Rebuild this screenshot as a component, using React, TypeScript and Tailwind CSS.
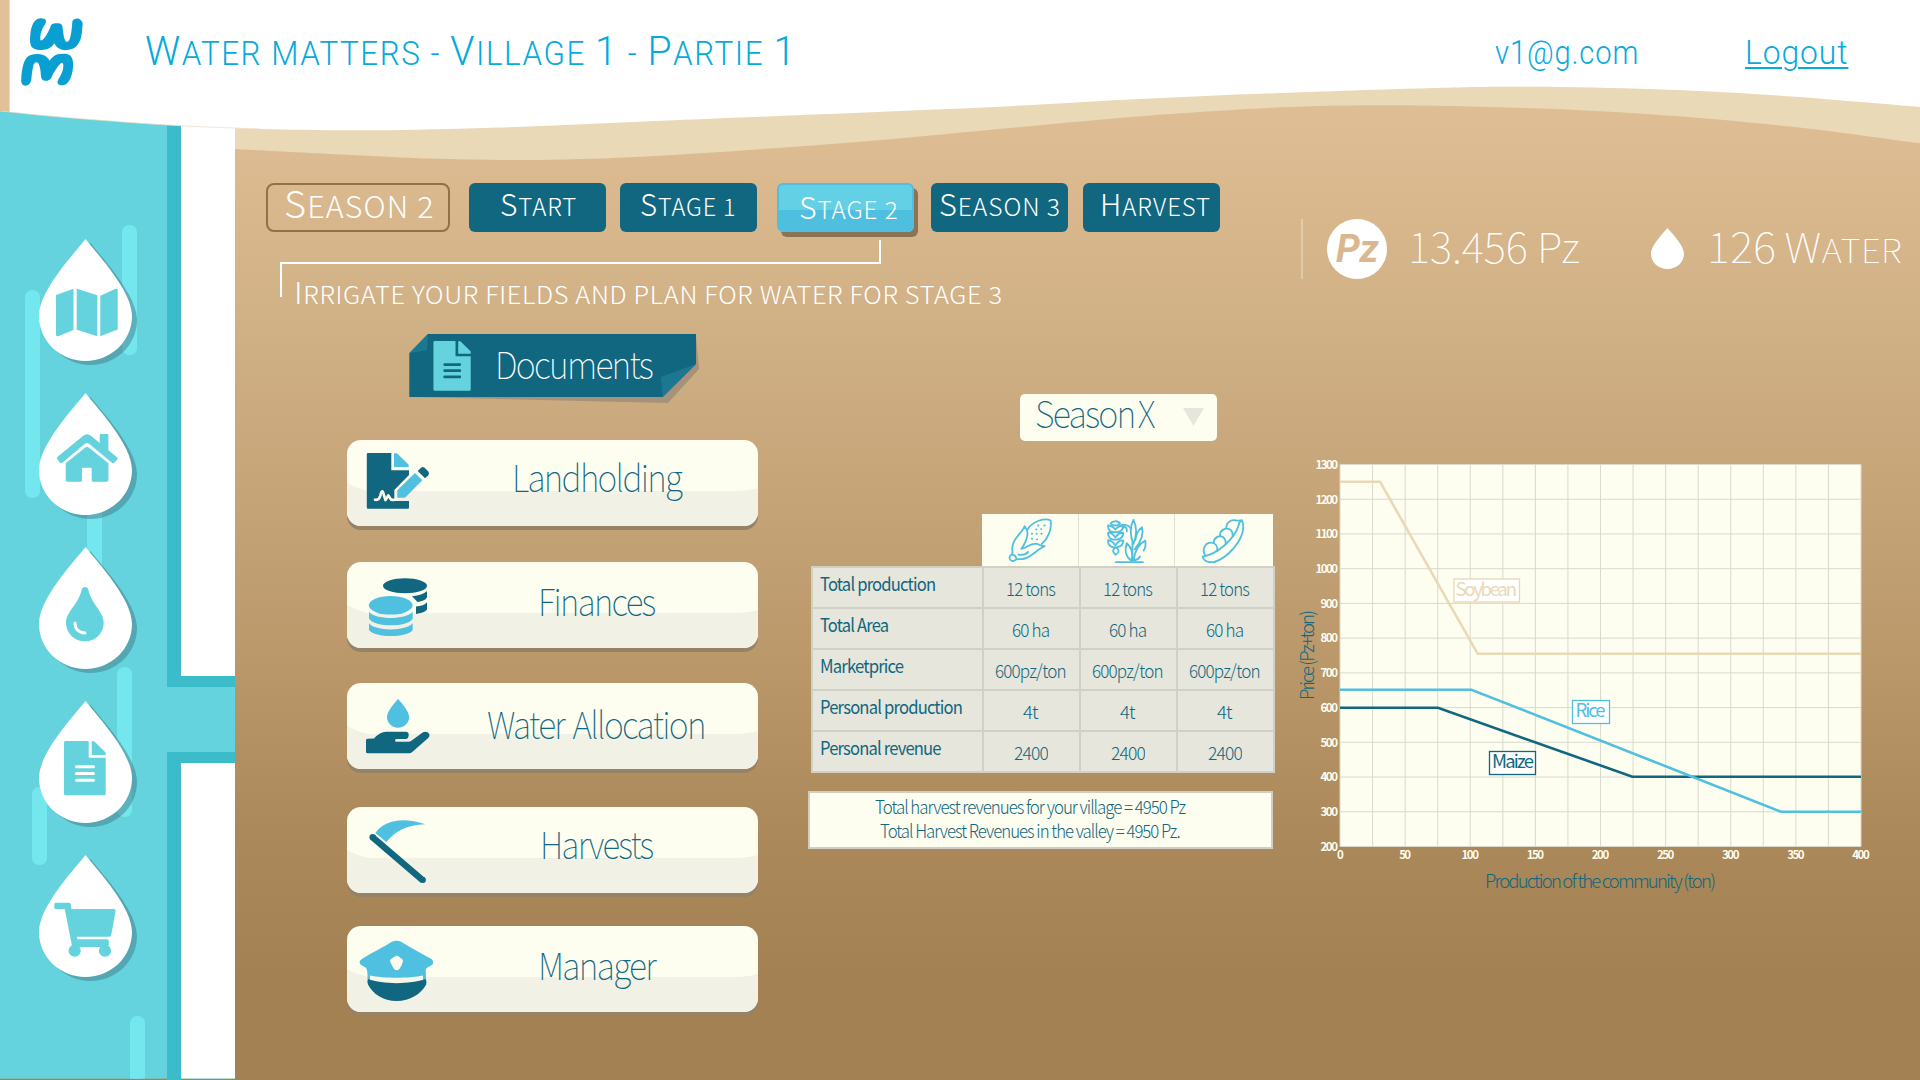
import React, { useLayoutEffect, useRef, useState } from "react";

/* ---------- text helpers ---------- */

/* Sets a line of text at an exact measure by condensing or widening it. */
function Fit({ w, className = "", children }: { w: number; className?: string; children: React.ReactNode }) {
  const ref = useRef<HTMLSpanElement>(null);
  const [scale, setScale] = useState(1);
  useLayoutEffect(() => {
    if (ref.current) setScale(w / ref.current.offsetWidth);
  }, [w]);
  return (
    <span className={`flex shrink-0 leading-none ${className}`} style={{ width: w }}>
      <span ref={ref} className="block shrink-0 origin-left whitespace-nowrap" style={{ transform: `scaleX(${scale})` }}>
        {children}
      </span>
    </span>
  );
}

/* Small capitals: lower-case runs are set as reduced capitals. */
function Caps({ text, smallDigits = false }: { text: string; smallDigits?: boolean }) {
  const pattern = smallDigits ? /([A-Z.]+)/ : /([A-Z0-9.]+)/;
  return (
    <>
      {text.split(pattern).map((part, i) =>
        i % 2 ? (
          <span key={i}>{part}</span>
        ) : (
          <span key={i} className="text-[0.8em] uppercase">
            {part}
          </span>
        )
      )}
    </>
  );
}

/* Smooth curve through a list of points. */
function curve(pts: number[][]) {
  let d = "";
  for (let i = 0; i < pts.length - 1; i++) {
    const p0 = pts[i - 1] || pts[i];
    const p1 = pts[i];
    const p2 = pts[i + 1];
    const p3 = pts[i + 2] || p2;
    d += ` C${p1[0] + (p2[0] - p0[0]) / 6} ${p1[1] + (p2[1] - p0[1]) / 6} ${p2[0] - (p3[0] - p1[0]) / 6} ${
      p2[1] - (p3[1] - p1[1]) / 6
    } ${p2[0]} ${p2[1]}`;
  }
  return d;
}

const upper = [[0, 111], [60, 117], [167, 125], [260, 129], [370, 130.3], [500, 127.5], [640, 121.7], [820, 114.3], [999, 106.7], [1140, 99], [1280, 93], [1443, 87.7], [1533, 86.8], [1655, 89.3], [1770, 95], [1920, 107]];
const lower = [[235, 149], [351, 155], [430, 158.6], [525, 160], [640, 156.7], [795, 146.7], [917, 136.7], [1007, 128.3], [1089, 120.7], [1170, 114], [1280, 107.3], [1385, 105.2], [1525, 108], [1647, 114], [1790, 126.5], [1920, 143.3]];

function Scenery() {
  return (
    <svg className="absolute inset-0" width="1920" height="1080" viewBox="0 0 1920 1080">
      <path d={`M235 100 L235 149${curve(lower)} L1920 60 L235 60Z`} fill="#e9d9b7" />
      <path d="M0 100H235V1078.7H0Z" fill="#64d3dd" />
      <path d="M167 100H181V676H235V687H167ZM167 752H235V763H181V1080H167Z" fill="#3cbcca" />
      <path d="M181 100H235V676H181ZM181 763H235V1078.5H181Z" fill="#fff" />
      <g fill="#74e7ee">
        <rect x="122" y="225" width="15" height="130" rx="7" />
        <rect x="25" y="290" width="15" height="208" rx="7" />
        <rect x="87" y="480" width="15" height="110" rx="7" />
        <rect x="117" y="667" width="15" height="150" rx="7" />
        <rect x="32" y="787" width="15" height="78" rx="7" />
        <rect x="130" y="1016" width="15" height="62.7" rx="7" />
        <rect x="130" y="1040" width="15" height="38.7" />
      </g>
      <path d={`M0 0 L0 111${curve(upper)} L1920 0Z`} fill="#fff" />
      <path d={`M0 111${curve(upper.slice(0, 4))}`} fill="none" stroke="#ecd9bd" strokeWidth="0.7" />
      <path d="M0 0H9.6V111.8L0 111Z" fill="#e3c198" />
    </svg>
  );
}

/* ---------- sidebar ---------- */

const DROP = "M46.5 0C60 17 93 52 93 77C93 102 72 122 46.5 122C21 122 0 102 0 77C0 52 33 17 46.5 0Z";

function DocShape() {
  return (
    <>
      <path d="M26.5 40H49.7V56.7H66.7V92.8Q66.7 94.3 65.2 94.3H26.5Q25 94.3 25 92.8V41.5Q25 40 26.5 40Z" />
      <path d="M52.7 40.3H55.2L66.7 51.5V54H52.7Z" />
    </>
  );
}

function DocLines({ stroke }: { stroke: string }) {
  return <path d="M37.5 65.7H54.5M37.5 72.4H54.5M37.5 79.2H54.5" stroke={stroke} strokeWidth="3" strokeLinecap="round" />;
}

const menu = [
  {
    name: "Map",
    icon: (
      <>
        <path d="M17 56L34.5 49.7V91L18.5 97.5L17 96.5Z" />
        <path d="M37.7 49.7L58.3 56.3V97.3L37.7 90.7Z" />
        <path d="M61.3 56.7L77.3 49.6L78.7 50.5V90.5L61.3 97.3Z" />
      </>
    ),
  },
  {
    name: "Home",
    icon: (
      <>
        <path d="M18.2 66Q17.4 65 18.6 63.8L44 43Q48 39.5 52.3 43L60.7 50V42.4Q60.7 41 62 41H68Q69.4 41 69.4 42.4V57.3L78 64.3Q79 65.4 78.3 66.4L75 70Q74 70.6 73 69.8L50 50.8Q48 49 46 50.8L23.3 69.8Q22.3 70.6 21.3 70Z" />
        <path d="M26.7 70.3L46.2 54.6Q48 53 49.8 54.6L69.4 70.3V87.3Q69.4 88.7 68 88.7H54Q52.7 88.7 52.7 87.5V76Q52.7 74.7 51.5 74.7H44.3Q43 74.7 43 76V87.5Q43 88.7 41.8 88.7H28.2Q26.7 88.7 26.7 87.3Z" />
      </>
    ),
  },
  {
    name: "Water",
    icon: (
      <>
        <path d="M42.6 43C43 39 49 39 49.4 43C52.5 57 64.7 65 64.7 75.5C64.7 86.5 56.5 94.3 46 94.3C35.5 94.3 27 86.5 27 75.5C27 65 39.5 57 42.6 43Z" />
        <path d="M36 76C36 82 40 85.7 46 86" fill="none" stroke="#fff" strokeWidth="3" strokeLinecap="round" />
      </>
    ),
  },
  {
    name: "Documents",
    icon: (
      <>
        <DocShape />
        <DocLines stroke="#fff" />
      </>
    ),
  },
  {
    name: "Shop",
    icon: (
      <>
        <path d="M17 47.7H30Q31.8 47.7 32 50L32.5 54H75Q77 54 76.6 56L72.3 79.8Q72 81.7 70 81.7H37.8L38.3 84.3H68Q69.8 84.3 69.8 86V90L66 92H40L33 91L25.8 54.3H17Q15.3 54.3 15.3 52.5V49.4Q15.3 47.7 17 47.7Z" />
        <circle cx="35.7" cy="95.7" r="6.1" />
        <circle cx="66" cy="95.7" r="6.1" />
      </>
    ),
  },
];

function Sidebar() {
  return (
    <aside className="flex w-[235px] shrink-0 flex-col gap-[26px] pl-[39px] pt-[111px]">
      {menu.map((m) => (
        <button key={m.name} aria-label={m.name} className="block h-[128px] w-[99px] shrink-0">
          <svg width="99" height="128" viewBox="0 0 99 128">
            <path d={DROP} transform="translate(5 4)" fill="#3f6f7e" fillOpacity="0.45" />
            <path d={DROP} fill="#fff" />
            <g fill="#64d3dd">{m.icon}</g>
          </svg>
        </button>
      ))}
    </aside>
  );
}

/* ---------- header ---------- */

function TopBar() {
  return (
    <header className="flex h-[128px] shrink-0 items-start text-[#06aadb]">
      <svg className="ml-[15px] mt-[12px] shrink-0" width="80" height="80" viewBox="45 36 240 240" fill="#0a9fd3">
        <path d="M112 57C120 53 136 54 138 62C138 68 136 72 131 79C124 92 120 105 121 118C121 124 127 122 133 114C141 104 147 92 151 82C154 72 158 70 169 70C180 70 185 71 187 79C190 94 190 112 196 122C200 128 206 126 209 118C214 104 216 82 217 64C221 55 230 54 236 56C244 59 249 66 248 74C246 84 247 96 244 108C240 128 230 142 216 147C202 152 186 152 176 145C170 141 166 136 163 130C158 138 150 145 140 148C126 152 108 151 99 144C90 138 89 122 91 104C92 84 100 62 112 57Z" />
        <path d="M64 236C64 222 66 212 68 202C72 184 78 170 92 165C104 161 118 161 128 164C138 167 144 174 149 182C154 174 164 166 172 163C184 160 200 160 208 165C218 171 220 184 219 200C218 220 212 240 200 251C192 257 180 258 174 252C170 246 174 238 180 230C188 216 190 206 190 196C190 188 186 186 181 191C172 200 166 210 160 220C155 230 154 240 142 242C130 243 124 240 123 228C122 214 120 198 115 190C111 184 104 186 100 196C97 210 95 224 94 238C92 252 84 257 76 257C66 256 62 246 64 236Z" />
      </svg>
      <h1 className="ml-[50px] mt-[31px] w-[647px]">
        <Fit w={652} className="font-['Roboto'] text-[41px] font-light tracking-[0.04em]">
          <Caps text="Water matters - Village 1 - Partie 1" />
        </Fit>
      </h1>
      <Fit w={144} className="ml-[703px] mt-[36px] font-['Roboto'] text-[33px] font-light tracking-[0.03em]">
        v1@g.com
      </Fit>
      <a className="ml-[106px] mt-[36px] block">
        <Fit w={103} className="font-['Roboto'] text-[33px] font-light tracking-[0.03em] underline decoration-2 underline-offset-[3px]">
          Logout
        </Fit>
      </a>
    </header>
  );
}

/* ---------- stage tabs ---------- */

function StageTabs() {
  const dark = "flex h-[49.3px] w-[137px] shrink-0 rounded-[6px] bg-[#10677f] text-[30px] font-light tracking-[0.03em] text-white";
  return (
    <nav className="flex pl-[31px]">
      <div className="flex h-[49.3px] w-[184px] shrink-0 rounded-[8px] border-2 border-[#937045] pl-[16px] text-[37px] font-light tracking-[0.03em] text-white">
        <Fit w={151} className="-mt-px"><Caps smallDigits text="Season 2" /></Fit>
      </div>
      <div className={`${dark} ml-[19px] pl-[31px]`}>
        <Fit w={77} className="mt-[5px]"><Caps text="Start" /></Fit>
      </div>
      <div className={`${dark} ml-[14px] pl-[20px]`}>
        <Fit w={97} className="mt-[5px]"><Caps smallDigits text="Stage 1" /></Fit>
      </div>
      <div className="ml-[20px] flex h-[49.3px] w-[137px] shrink-0 rounded-[6px] border-2 border-[#4fbfdf] bg-[linear-gradient(to_bottom,#64d0e6_55%,#4fbfdf_55%)] pl-[20px] text-[30px] font-light tracking-[0.03em] text-white shadow-[4px_5px_0_#8b7355]">
        <Fit w={100} className="mt-[6px]"><Caps smallDigits text="Stage 2" /></Fit>
      </div>
      <div className={`${dark} ml-[17px] pl-[8px]`}>
        <Fit w={122} className="mt-[5px]"><Caps smallDigits text="Season 3" /></Fit>
      </div>
      <div className={`${dark} ml-[15px] pl-[17px]`}>
        <Fit w={111} className="mt-[5px]"><Caps text="Harvest" /></Fit>
      </div>
    </nav>
  );
}

function Stats() {
  return (
    <div className="ml-[81px] mt-[36px] flex h-[60px] shrink-0 items-start border-l-2 border-white/30 pl-[24px] text-white">
      <div className="flex size-[60px] shrink-0 items-center justify-center rounded-full bg-white font-['Roboto'] text-[39px] font-bold italic text-[#d9b88f]">
        <Fit w={43}>Pz</Fit>
      </div>
      <Fit w={172} className="ml-[21px] mt-[5px] text-[42px] font-thin">13.456 Pz</Fit>
      <svg className="ml-[71px] mt-[9px] shrink-0" width="33" height="41" viewBox="0 0 93 122" preserveAspectRatio="none">
        <path d={DROP} fill="#fff" />
      </svg>
      <Fit w={195} className="ml-[23px] mt-[5px] text-[42px] font-thin tracking-[0.01em]"><Caps text="126 Water" /></Fit>
    </div>
  );
}

/* ---------- documents column ---------- */

const DARK = "#10677f";
const BLUE = "#4fc0e0";

const documents = [
  {
    label: "Landholding", w: 169, gap: "mt-[37px]", drop: "mt-[18px]",
    icon: (
      <>
        <path d="M21 13H44.3V30.3H62V35L47.3 50V61H62V67.5Q62 68.7 60.8 68.7H21Q19.8 68.7 19.8 67.5V14.2Q19.8 13 21 13Z" fill={DARK} />
        <path d="M47 13.3H50L61.7 24.7V27H47Z" fill={BLUE} />
        <path d="M50.3 50.3L68 33L75.3 40.3L58 57.7H50.3Z" fill={BLUE} />
        <path d="M70.7 31L74 27.7Q75.8 26.3 77.6 27.7L81.3 31.5Q82.7 33.3 81.3 35.2L78 38.3Z" fill={DARK} />
        <path d="M28 59.7Q32 60.5 33.2 56Q35.3 47 37 55.5L38.5 60L41.3 55.5L44 59.5Q46 60.5 50 59.3" fill="none" stroke="#f8f8ea" strokeWidth="2.7" strokeLinecap="round" strokeLinejoin="round" />
      </>
    ),
  },
  {
    label: "Finances", w: 117, gap: "mt-[36px]", drop: "mt-[20px]",
    icon: (
      <>
        <ellipse cx="58" cy="23.7" rx="22" ry="7.5" fill={DARK} />
        <path d="M80 29V35C79 38 75 39.3 70.5 40L65 34.3C72 33.5 77 32 80 29ZM80 40.3V47.5C78 50 74 51.3 69 52V44.5C74 44 78 43 80 40.3Z" fill={DARK} />
        <ellipse cx="43.7" cy="43.3" rx="21.9" ry="9.3" fill={BLUE} />
        <path d="M22 49.7C28 58 59 58 65.7 49.7V56.7C60 65.5 28 65.5 22 56.7ZM22 61.3C28 69.5 59 69.5 65.7 61.3V68C60 76 28 76 22 68Z" fill={BLUE} />
      </>
    ),
  },
  {
    label: "Water Allocation", w: 218, gap: "mt-[35px]", drop: "mt-[22px]",
    icon: (
      <>
        <path d={DROP} transform="translate(40 15.7) scale(.238)" fill={BLUE} />
        <path d="M19 57Q19 56 20.5 55.8L27 55.5Q33 48.7 39 48.7H59Q61.5 48.8 61.7 51.5Q61.7 55.7 59 56H49.5Q48 56.3 48 57.4Q48 58.7 49.5 58.8H61.5Q63 58.8 64 58L76 49.3Q80 47.5 82.3 51Q83 53 81.5 54.8L65.5 68.8Q64 70.3 62 70.3H20.5Q19 70.3 19 69Z" fill={DARK} />
      </>
    ),
  },
  {
    label: "Harvests", w: 113, gap: "mt-[38px]", drop: "mt-[18px]",
    icon: (
      <>
        <path d="M28.3 26C36.5 14.5 54 9 78.3 17.3C60 18 48 24.3 39.3 35Z" fill={BLUE} />
        <path d="M25.5 30L27 31.5L76 73.5" fill="none" stroke={DARK} strokeWidth="6.3" strokeLinejoin="round" />
        <circle cx="25.7" cy="30.3" r="3.2" fill={DARK} />
        <circle cx="76" cy="73" r="2.9" fill={DARK} />
      </>
    ),
  },
  {
    label: "Manager", w: 117, gap: "mt-[33px]", drop: "mt-[20px]",
    icon: (
      <>
        <path d="M12.7 37Q12 35 14.5 33.3C24 27 36 21.5 44 16.2Q49.5 13.3 55 16.2C63 21.5 74 27 83.5 32.5Q87.5 35 85.5 38.5C81 41.5 79 41 78.7 45L79.2 57L20.5 57V50C20.5 41 19 42 15 39.5Q13 38.5 12.7 37Z" fill={BLUE} />
        <path d="M43 34.7Q43 33.7 44.5 32.7L48.5 30Q49.7 29.5 51 30L54.7 32.7Q56.2 33.7 56 35C55 39 53 42.5 51.5 43.8Q49.7 44.7 48 43.8C46 42 44 38 43 34.7Z" fill="#fbfbee" />
        <path d="M23 49.5C36 52.5 63 52.5 76 49.5V54.5L79.2 58H20.5L23 54.5Z" fill="#f8f8ea" />
        <path d="M21 53C36 58.5 63 58.5 78.7 53Q80 56.5 79.2 58.5C74 68 63 75 49.7 75C36 75 26 68 21 58.5Q20 56.5 21 53Z" fill={DARK} />
      </>
    ),
  },
];

function Documents() {
  return (
    <section className="ml-[112px] flex w-[411px] shrink-0 flex-col">
      <div className="relative ml-[62px] mt-[37px] flex h-[69px] w-[291px] shrink-0">
        <svg className="absolute inset-0" width="291" height="69" viewBox="409 334 291 69">
          <path d="M696 337L699 369L668 403L411 397Z" fill="#a6917b" />
          <path d="M409.3 353.3L428 334H696V364L662.7 397H409.3Z" fill={DARK} />
          <path d="M428 334L427 350L409.3 353.3ZM696 364L661 377L662.7 397Z" fill="#1c7891" />
        </svg>
        <svg className="relative ml-[24px] mt-[7px] shrink-0" width="38" height="50" viewBox="24.5 40 42.5 54.5" preserveAspectRatio="none" fill="#64d3dd">
          <DocShape />
          <DocLines stroke={DARK} />
        </svg>
        <Fit w={157} className="relative ml-[24px] mt-[11px] text-[37px] font-thin tracking-[-0.05em] text-white">Documents</Fit>
      </div>
      {documents.map((d) => (
        <button key={d.label} className={`${d.gap} relative flex h-[86px] w-[411px] shrink-0 items-start rounded-[14px] bg-[#fdfdf0] shadow-[0_4px_0_#968267]`}>
          <svg className="absolute inset-0 rounded-[14px]" width="411" height="86" viewBox="0 0 411 86">
            <path d="M0 43C6 46 12 49 22 51H388Q402 50.5 411 48V86H0Z" fill="#f1f1e5" />
          </svg>
          <svg className="relative shrink-0" width="90" height="86" viewBox="0 0 90 86">{d.icon}</svg>
          <span className={`${d.drop} relative flex flex-1 justify-center pr-[3px]`}>
            <Fit w={d.w} className="text-[37px] font-thin tracking-[-0.05em] text-[#10677f] [word-spacing:0.08em]">{d.label}</Fit>
          </span>
        </button>
      ))}
    </section>
  );
}

/* ---------- harvest table ---------- */

function Maize() {
  return (
    <svg className="shrink-0" width="97" height="54" viewBox="576 430 291 162" fill="none" stroke="#4fc0e0" strokeWidth="5.5" strokeLinecap="round" strokeLinejoin="round">
      <path d="M705 466C698 488 664 505 668 540Q670 552 662 555C655 565 665 575 675 570Q680 565 690 566C722 568 735 540 766 527C752 527 748 519 738 519C715 521 710 533 695 535C706 520 712 505 714 490Q715 478 705 466Z" />
      <path d="M713 478C728 450 768 440 784 449C788 475 777 503 757 520M669 552C674 553 679 557 680 564M686 552Q706 556 716 544" />
      <path d="M746 464h1M765 464h1M740 476h1M755 475h1M727 489h1M741 489h1M756 489h1M727 504h1M742 506h1" />
    </svg>
  );
}

function Rice() {
  return (
    <svg className="shrink-0" width="96" height="54" viewBox="869 430 288 162" fill="none" stroke="#4fc0e0" strokeWidth="5.5" strokeLinecap="round" strokeLinejoin="round">
      <path d="M980 575H1063" />
      <path d="M965 458C968 450 988 448 993 458C988 466 970 466 965 458Z" />
      <path d="M979 476C970 464 960 464 957 464C956 478 966 486 979 484C992 486 1004 478 1003 464C996 464 986 468 979 476ZM979 500C970 486 960 484 957 486C956 500 966 508 979 507C992 508 1004 500 1003 486C996 486 986 490 979 500ZM979 524C970 510 960 508 957 509C956 524 966 531 977 530C992 531 1004 524 1003 509C996 508 986 514 979 524ZM980 530C970 538 970 544 980 553C992 544 992 538 980 530Z" />
      <path d="M993 464C1005 458 1024 464 1027 476M1000 468Q1016 466 1014 482" />
      <path d="M1034 447C1022 470 1022 490 1034 520C1046 490 1046 470 1034 447ZM1031 515V570M1060 469C1044 482 1041 495 1040 508M1060 469C1066 490 1055 515 1038 536M1070 510C1048 520 1038 540 1035 570M1070 510Q1073 528 1065 540M1037 570Q1048 568 1054 558M1014 518C1006 540 1012 560 1028 571C1033 550 1028 530 1014 518Z" />
    </svg>
  );
}

function Peas() {
  return (
    <svg className="shrink-0" width="96" height="54" viewBox="1160 430 288 162" fill="none" stroke="#4fc0e0" strokeWidth="5.5" strokeLinecap="round" strokeLinejoin="round">
      <path d="M1243 558C1246 572 1262 576 1278 574C1318 562 1364 510 1365 470Q1365 457 1361 449Q1350 456 1351 464C1340 502 1290 550 1243 558Z" />
      <path d="M1250 553C1240 534 1252 515 1269 516C1282 517 1288 528 1287 541M1276 517C1276 500 1292 493 1304 499Q1313 506 1312 519M1295 495C1295 478 1310 470 1324 476Q1334 482 1333 497M1314 471C1314 453 1332 445 1346 450L1360 449" />
    </svg>
  );
}

const rows = [
  { label: "Total production", lw: 115, value: "12 tons", vw: 49 },
  { label: "Total Area", lw: 68, value: "60 ha", vw: 37 },
  { label: "Marketprice", lw: 83, value: "600pz/ton", vw: 71 },
  { label: "Personal production", lw: 142, value: "4t", vw: 15 },
  { label: "Personal revenue", lw: 121, value: "2400", vw: 34 },
];

function Harvest() {
  return (
    <section className="ml-[50px] flex w-[466px] shrink-0 flex-col text-[#10677f]">
      <div className="ml-[211.5px] mt-[97px] flex h-[47px] w-[197px] shrink-0 items-start rounded-[5px] bg-[#fdfdf0] pl-[15px]">
        <Fit w={119} className="text-[37px] font-thin tracking-[-0.05em] [word-spacing:-0.08em]">Season X</Fit>
        <svg className="ml-[29px] mt-[14px]" width="21" height="18" viewBox="0 0 21 18"><path d="M0 0H21L10.5 18Z" fill="#e6e6dc" /></svg>
      </div>
      <div className="ml-[174px] mt-[72.5px] flex h-[53.5px] w-[291px] shrink-0 divide-x divide-[#e0e0d5] overflow-hidden bg-[#fdfdf0]">
        <Maize />
        <Rice />
        <Peas />
      </div>
      <table className="-mt-px ml-[3px] w-[463px] table-fixed border-collapse bg-[#e6e6dc]">
        <colgroup>
          <col className="w-[171px]" />
          <col className="w-[97px]" />
          <col className="w-[97px]" />
          <col className="w-[97px]" />
        </colgroup>
        <tbody>
          {rows.map((r) => (
            <tr key={r.label} className="h-[41px]">
              <th className="border-2 border-[#d0d0c4] p-0 pb-[8px] pl-[7px] text-left text-[18.5px] font-normal tracking-[-0.05em]">
                <Fit w={r.lw}>{r.label}</Fit>
              </th>
              {[0, 1, 2].map((c) => (
                <td key={c} className="border-2 border-[#d0d0c4] p-0 pt-px text-[18.5px] font-light tracking-[-0.05em]">
                  <div className="flex justify-center pr-[2px]"><Fit w={r.vw}>{r.value}</Fit></div>
                </td>
              ))}
            </tr>
          ))}
        </tbody>
      </table>
      <div className="mt-[18px] flex h-[57.5px] w-[465px] shrink-0 flex-col items-center border-2 border-[#cfcfc3] bg-[#fdfdf0] pr-[21px] pt-[4px] text-[18.5px] font-light tracking-[-0.06em]">
        <Fit w={310}>Total harvest revenues for your village = 4950 Pz</Fit>
        <Fit w={300} className="mt-[5.5px]">Total Harvest Revenues in the valley = 4950 Pz.</Fit>
      </div>
    </section>
  );
}

/* ---------- price chart ---------- */

const X0 = 1340, X1 = 1861, Y0 = 464.5, Y1 = 846.5;
const gx = (v: number) => X0 + ((X1 - X0) * v) / 400;
const gy = (v: number) => Y1 - ((Y1 - Y0) * (v - 200)) / 1100;

function Chart() {
  const xs = Array.from({ length: 17 }, (_, i) => i * 25);
  const ys = Array.from({ length: 12 }, (_, i) => 200 + i * 100);
  return (
    <svg className="ml-[16px] mt-[153px] shrink-0" width="590" height="450" viewBox="1290 450 590 450">
      <rect x={X0} y={Y0} width={X1 - X0} height={Y1 - Y0} fill="#fdfdf0" />
      {xs.map((v) => <path key={v} d={`M${gx(v)} ${Y0}V${Y1}`} stroke="#d9d9cd" />)}
      {ys.map((v) => <path key={v} d={`M${X0} ${gy(v)}H${X1}`} stroke="#d9d9cd" />)}
      <g fill="none" strokeWidth="2.6">
        <path d="M1340 481.7H1380L1477.700 653.8H1861" stroke="#e9d9b7" />
        <path d="M1340 707.8H1438L1632.3 776.7H1861" stroke={DARK} />
        <path d="M1340 689.7H1471.4L1781 811.7H1861" stroke={BLUE} />
      </g>
      <g fill="#fff" strokeWidth="1.3">
        <rect x="1454" y="579" width="65.5" height="23" stroke="#e9d9b7" />
        <rect x="1572.5" y="700.5" width="37" height="23" stroke={BLUE} />
        <rect x="1489.5" y="751.5" width="46" height="23" stroke={DARK} />
      </g>
      <g fontSize="18.5">
        <text x="1455.5" y="595.7" textLength="61.5" fill="#e9d9b7">Soybean</text>
        <text x="1575.5" y="716.7" textLength="30" fill={BLUE}>Rice</text>
        <text x="1492" y="767.7" textLength="42" fill={DARK}>Maize</text>
        <text x="1485" y="887.7" textLength="231" fill={DARK} fontWeight="300">Production of the community (ton)</text>
        <text transform="translate(1314 700) rotate(-90)" textLength="90" fill={DARK} fontWeight="300">Price (Pz+ton)</text>
      </g>
      <g fontSize="11.5" fontWeight="700" fill="#fdfdf0">
        {ys.map((v) => {
          const w = v >= 1000 ? 22.5 : 17.5;
          return <text key={v} x={1338 - w} y={gy(v) + 4.3} textLength={w}>{v}</text>;
        })}
        {xs.filter((v) => v % 50 === 0).map((v) => {
          const w = v >= 100 ? 17.5 : v ? 12 : 6;
          return <text key={v} x={gx(v) - w / 2} y={859} textLength={w}>{v}</text>;
        })}
      </g>
    </svg>
  );
}

export default function App() {
  return (
    <div className="relative flex h-[1080px] w-[1920px] flex-col overflow-hidden bg-[linear-gradient(to_bottom,#e5c49b_0px,#dfbd94_120px,#cfaf84_340px,#c4a377_510px,#ba986a_660px,#ab895a_830px,#a38153_980px,#a38153_1080px)] font-['Noto_Sans_CJK_SC',sans-serif]">
      <Scenery />
      <div className="relative flex h-full flex-col">
        <TopBar />
        <div className="flex flex-1">
          <Sidebar />
          <main className="flex flex-1 flex-col">
            <div className="flex h-[169px] shrink-0 items-start pt-[55px]">
              <div className="w-[985px] shrink-0">
                <StageTabs />
                <div className="ml-[45px] mt-[8px] h-[22px] w-[601px] border-r-2 border-white" />
                <div className="ml-[45px] flex h-[35px] w-[601px] border-l-2 border-t-2 border-white pl-[12px] text-[30px] font-light tracking-[0.02em] text-white">
                  <Fit w={709} className="mt-[12px]"><Caps smallDigits text="Irrigate your fields and plan for water for stage 3" /></Fit>
                </div>
              </div>
              <Stats />
            </div>
            <div className="flex items-start">
              <Documents />
              <Harvest />
              <Chart />
            </div>
          </main>
        </div>
      </div>
    </div>
  );
}
